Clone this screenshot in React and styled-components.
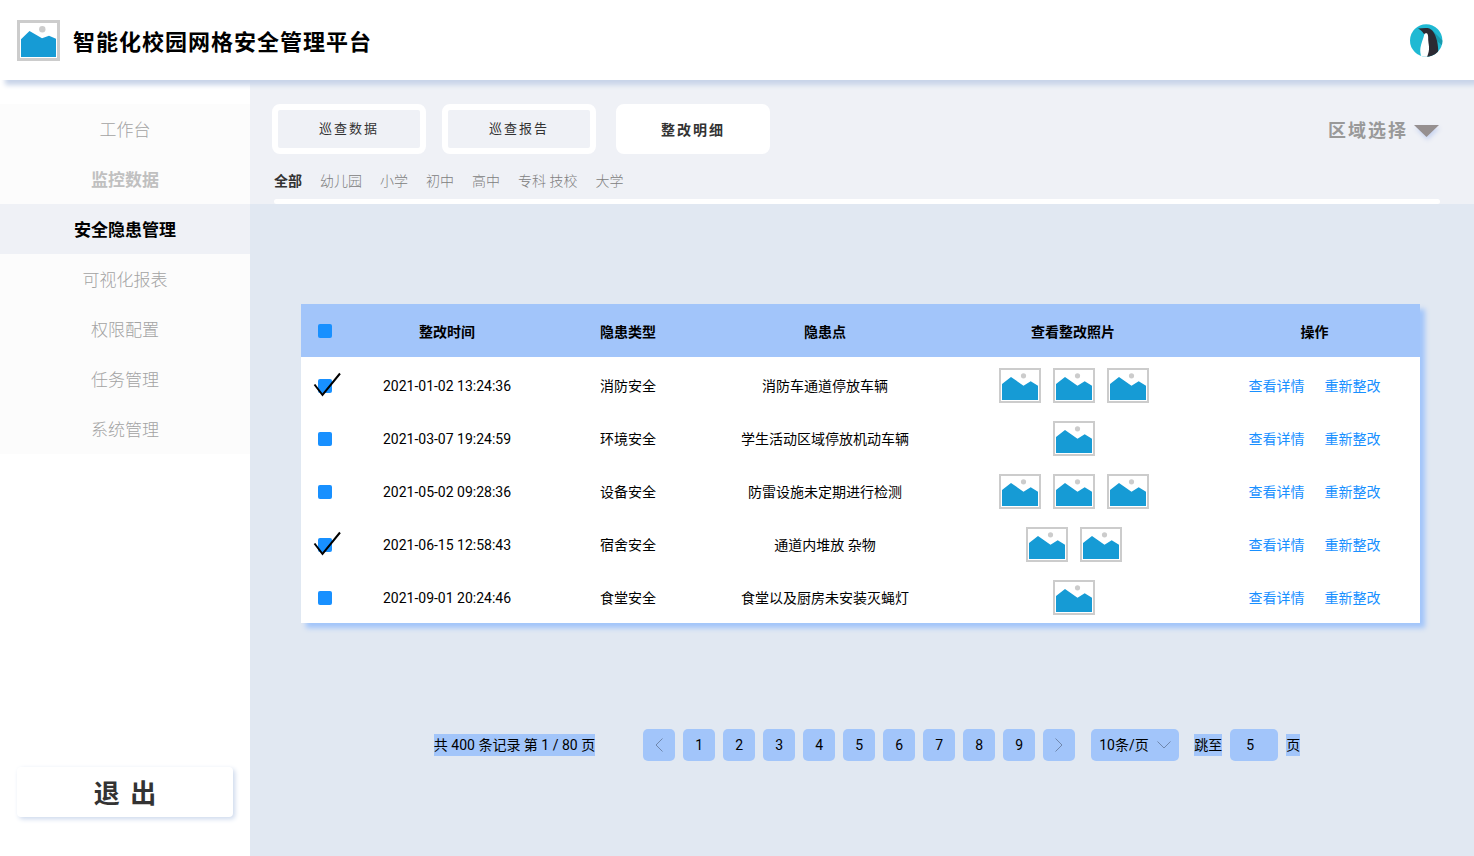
import React from "react";
import styled, { createGlobalStyle, css } from "styled-components";

const GlobalStyle = createGlobalStyle`
  *, *::before, *::after { box-sizing: border-box; }
  body {
    margin: 0;
    background: #fff;
    color: #000;
    font: 14px/22px Roboto, "Noto Sans CJK SC", sans-serif;
  }
  button, input, select { font: inherit; color: inherit; }
`;

const accent = "#1890ff";
const soft = "#a2c5fa";

const Page = styled.div`
  min-height: 100vh;
  display: flex;
  flex-direction: column;
`;

const TopBar = styled.header`
  position: relative;
  z-index: 1;
  display: flex;
  align-items: center;
  height: 80px;
  padding: 0 31px 0 17px;
  background: #fff;
  box-shadow: 5px 5px 5px #c8d4e9;
`;

const Title = styled.h1`
  margin: 0 auto 0 13px;
  padding-top: 6px;
  font-size: 22px;
  line-height: 32px;
  font-weight: 700;
  letter-spacing: 1px;
`;

const Body = styled.div`
  flex: 1;
  display: flex;
`;

const Sidebar = styled.aside`
  width: 250px;
  flex: none;
  display: flex;
  flex-direction: column;
  justify-content: space-between;
  padding: 24px 0 39px;
  background: #fff;
`;

const MenuItem = styled.a`
  display: block;
  padding-top: 2px;
  font-size: 17px;
  line-height: 48px;
  text-align: center;
  text-decoration: none;
  font-weight: 300;
  color: #a3a3a3;
  background: #fcfcfc;
  ${(p) => p.$strong && css`
    font-weight: 700;
    color: #c0c0c0;
  `}
  ${(p) => p.$active && css`
    font-weight: 700;
    color: #000;
    background: #eff1f6;
  `}
`;

const ExitButton = styled.button`
  height: 50px;
  margin: 0 17px;
  padding: 4px 0 0 2px;
  border: 0;
  border-radius: 4px;
  background: #fff;
  box-shadow: 2px 2px 5px #ccd8ec;
  font-size: 26px;
  font-weight: 700;
  letter-spacing: 2px;
  color: #333;
`;

const Main = styled.main`
  flex: 1;
  min-width: 0;
  background: #e1e8f2;
`;

const Toolbar = styled.section`
  padding: 24px 34px 0 22px;
  background: #eff1f6;
`;

const TabRow = styled.div`
  display: flex;
  align-items: center;
  gap: 16px;
`;

const Tab = styled.button`
  width: 154px;
  height: 50px;
  padding: 0;
  border: 6px solid #fff;
  border-radius: 8px;
  background: #eff1f6;
  font-size: 13px;
  letter-spacing: 2px;
  color: #333;
  ${(p) => p.$active && css`
    margin-left: 4px;
    padding-top: 2px;
    background: #fff;
    font-size: 14px;
    font-weight: 700;
  `}
`;

const Region = styled.label`
  display: flex;
  align-items: center;
  gap: 6px;
  margin-left: auto;
  padding: 4px 1px 0 0;
`;

const RegionSelect = styled.select`
  appearance: none;
  border: 0;
  padding: 0;
  background: none;
  font-size: 18px;
  line-height: 28px;
  font-weight: 700;
  letter-spacing: 2px;
  color: #999;
`;

const RegionArrow = styled.svg`
  filter: drop-shadow(1px 3px 2px #c8d4f0);
`;

const Filters = styled.nav`
  display: flex;
  gap: 18px;
  padding: 16px 2px 7px;
`;

const Filter = styled.a`
  text-decoration: none;
  font-weight: ${(p) => (p.$active ? 700 : 300)};
  color: ${(p) => (p.$active ? "#333" : "#808080")};
`;

const Rule = styled.div`
  height: 5px;
  margin-left: 2px;
  border-radius: 3px;
  background: #fff;
`;

const Card = styled.section`
  margin: 100px 54px 106px 51px;
  padding-bottom: 1px;
  background: #fff;
  box-shadow: 5px 5px 5px ${soft};
`;

const Table = styled.table`
  width: 100%;
  table-layout: fixed;
  border-collapse: collapse;
  text-align: center;
`;

const Col = styled.col`
  width: ${(p) => p.$w}px;
`;

const HeadCell = styled.th`
  height: 53px;
  padding: ${(p) => (p.$tick ? 1 : 3)}px 0 0;
  font-weight: 700;
  background: ${soft};
`;

const Cell = styled.td`
  height: 53px;
  padding: 4px 0 0;
`;

const TickBox = styled.label`
  position: relative;
  display: block;
  width: 14px;
  height: 14px;
  margin: 0 auto 0 17px;
`;

const TickInput = styled.input`
  appearance: none;
  display: block;
  width: 14px;
  height: 14px;
  margin: 0;
  border-radius: 2px;
  background: ${accent};
  & + svg { display: none; }
  &:checked + svg { display: block; }
`;

const TickMark = styled.svg`
  position: absolute;
  left: -5px;
  top: -7px;
  pointer-events: none;
`;

const Photos = styled.div`
  display: flex;
  justify-content: center;
  gap: 12px;
  padding-left: 1px;
`;

const Actions = styled.div`
  display: flex;
  justify-content: center;
  gap: 20px;
`;

const ActionLink = styled.a`
  color: ${accent};
  text-decoration: none;
`;

const Pager = styled.nav`
  display: flex;
  justify-content: center;
  align-items: center;
  gap: 8px;
  padding: 0 0 24px 10px;
`;

const Marked = styled.label`
  background: ${soft};
  white-space: nowrap;
`;

const Summary = styled(Marked).attrs({ as: "span" })`
  margin-right: 40px;
`;

const PageButton = styled.button`
  display: grid;
  place-items: center;
  width: 32px;
  height: 32px;
  padding: 0;
  border: 0;
  border-radius: 5px;
  background: ${soft};
`;

const SizePicker = styled.label`
  display: flex;
  align-items: center;
  gap: 8px;
  width: 88px;
  height: 32px;
  margin: 0 7px 0 8px;
  padding: 0 8px;
  border-radius: 5px;
  background: ${soft};
`;

const SizeSelect = styled.select`
  appearance: none;
  border: 0;
  padding: 0;
  background: none;
`;

const PageInput = styled.input`
  width: 48px;
  height: 32px;
  border: 0;
  padding: 0 8px 0 0;
  border-radius: 5px;
  background: ${soft};
  text-align: center;
`;

const Logo = () => (
  <svg width="43" height="41" viewBox="0 0 43 41" aria-hidden="true">
    <rect x="1.5" y="1.5" width="40" height="38" fill="#fff" stroke="#ccc" strokeWidth="3" />
    <path d="M4 19.3 12.5 11 25 18.3 32 15.7 39 18.7V37H4Z" fill="#169bd5" />
    <circle cx="25.3" cy="9.3" r="3.2" fill="#ccc" />
  </svg>
);

const Photo = () => (
  <svg width="42" height="35" viewBox="0 0 42 35" aria-hidden="true">
    <rect x="1" y="1" width="40" height="33" fill="#fff" stroke="#ccc" strokeWidth="2" />
    <path d="M3 16 12 9 24.5 17.7 31.7 13.3 39 17.7V32H3Z" fill="#169bd5" />
    <circle cx="24.5" cy="7.8" r="2.6" fill="#ccc" />
  </svg>
);

const Avatar = () => (
  <svg width="33" height="33" viewBox="0 0 33 33" role="img" aria-label="用户">
    <clipPath id="avatar-disc"><circle cx="16.2" cy="16.5" r="16.2" /></clipPath>
    <g clipPath="url(#avatar-disc)">
      <rect width="33" height="33" fill="#1fb9d3" />
      <path d="M21 5 33 17V22L27 17Z" fill="#1799ad" />
      <path d="M8 4.500C12 4.300 16 3.500 19.500 4.500C23.500 6.500 26 12 27.300 18C28 22 28.300 25 28.200 30L17 33.500 15 10 13.500 9.500C12.500 7.500 10.500 5.500 8 4.500Z" fill="#2b2a33" />
      <path d="M14.300 10.500C14.800 9.300 15.800 8.900 17 9.300C18.300 10.500 18.200 13 18.200 16C18.500 20 19.300 22 19 25.500C18.800 28.500 17.500 31 17.200 33H11.500C10.300 30 10 27 10.400 24C11 19.500 13.200 15 14.300 10.500Z" fill="#fff" />
    </g>
  </svg>
);

const Chevron = ({ d, w, h }) => (
  <svg width={w} height={h} viewBox={`0 0 ${w} ${h}`} fill="none" stroke="#6f87ad" aria-hidden="true">
    <path d={d} />
  </svg>
);

function Tick({ checked, label }) {
  return (
    <TickBox>
      <TickInput type="checkbox" defaultChecked={checked} aria-label={label} />
      <TickMark width="30" height="26" viewBox="0 0 30 26" fill="none" stroke="#000" strokeWidth="2">
        <path d="M1.500 12.500 9.500 23 27 1.500" />
      </TickMark>
    </TickBox>
  );
}

const menu = ["工作台", "监控数据", "安全隐患管理", "可视化报表", "权限配置", "任务管理", "系统管理"];
const tabs = ["巡查数据", "巡查报告", "整改明细"];
const filters = ["全部", "幼儿园", "小学", "初中", "高中", "专科 技校", "大学"];
const columns = [50, 192, 170, 224, 272, 211];
const heads = ["整改时间", "隐患类型", "隐患点", "查看整改照片", "操作"];
const rows = [
  { time: "2021-01-02 13:24:36", type: "消防安全", point: "消防车通道停放车辆", photos: 3, checked: true },
  { time: "2021-03-07 19:24:59", type: "环境安全", point: "学生活动区域停放机动车辆", photos: 1 },
  { time: "2021-05-02 09:28:36", type: "设备安全", point: "防雷设施未定期进行检测", photos: 3 },
  { time: "2021-06-15 12:58:43", type: "宿舍安全", point: "通道内堆放 杂物", photos: 2, checked: true },
  { time: "2021-09-01 20:24:46", type: "食堂安全", point: "食堂以及厨房未安装灭蝇灯", photos: 1 },
];

export default function App() {
  return (
    <Page>
      <GlobalStyle />
      <TopBar>
        <Logo />
        <Title>智能化校园网格安全管理平台</Title>
        <Avatar />
      </TopBar>
      <Body>
        <Sidebar>
          <nav>
            {menu.map((m, i) => (
              <MenuItem key={m} href="#" $strong={i === 1} $active={i === 2}>{m}</MenuItem>
            ))}
          </nav>
          <ExitButton type="button">退 出</ExitButton>
        </Sidebar>
        <Main>
          <Toolbar>
            <TabRow>
              {tabs.map((t, i) => (
                <Tab key={t} type="button" $active={i === 2}>{t}</Tab>
              ))}
              <Region>
                <RegionSelect aria-label="区域选择">
                  <option>区域选择</option>
                </RegionSelect>
                <RegionArrow width="25" height="12" viewBox="0 0 25 12" aria-hidden="true">
                  <path d="M0 0H25L12.500 12Z" fill="#969090" />
                </RegionArrow>
              </Region>
            </TabRow>
            <Filters>
              {filters.map((f, i) => (
                <Filter key={f} href="#" $active={i === 0}>{f}</Filter>
              ))}
            </Filters>
            <Rule />
          </Toolbar>
          <Card>
            <Table>
              <colgroup>
                {columns.map((w) => <Col key={w} $w={w} />)}
              </colgroup>
              <thead>
                <tr>
                  <HeadCell $tick><Tick label="全选" /></HeadCell>
                  {heads.map((h) => <HeadCell key={h}>{h}</HeadCell>)}
                </tr>
              </thead>
              <tbody>
                {rows.map((r) => (
                  <tr key={r.time}>
                    <Cell><Tick checked={r.checked} label={r.point} /></Cell>
                    <Cell>{r.time}</Cell>
                    <Cell>{r.type}</Cell>
                    <Cell>{r.point}</Cell>
                    <Cell>
                      <Photos>
                        {Array.from({ length: r.photos }, (_, i) => <Photo key={i} />)}
                      </Photos>
                    </Cell>
                    <Cell>
                      <Actions>
                        <ActionLink href="#">查看详情</ActionLink>
                        <ActionLink href="#">重新整改</ActionLink>
                      </Actions>
                    </Cell>
                  </tr>
                ))}
              </tbody>
            </Table>
          </Card>
          <Pager>
            <Summary>共 400 条记录 第 1 / 80 页</Summary>
            <PageButton type="button" aria-label="上一页">
              <Chevron w={8} h={14} d="M7.500 0.500 1 7 7.500 13.500" />
            </PageButton>
            {[1, 2, 3, 4, 5, 6, 7, 8, 9].map((n) => (
              <PageButton key={n} type="button">{n}</PageButton>
            ))}
            <PageButton type="button" aria-label="下一页">
              <Chevron w={8} h={14} d="M0.500 0.500 7 7 0.500 13.500" />
            </PageButton>
            <SizePicker>
              <SizeSelect aria-label="每页条数">
                <option>10条/页</option>
              </SizeSelect>
              <Chevron w={14} h={8} d="M0.500 0.500 7 7 13.500 0.500" />
            </SizePicker>
            <Marked htmlFor="jump">跳至</Marked>
            <PageInput id="jump" defaultValue="5" />
            <Marked htmlFor="jump">页</Marked>
          </Pager>
        </Main>
      </Body>
    </Page>
  );
}
